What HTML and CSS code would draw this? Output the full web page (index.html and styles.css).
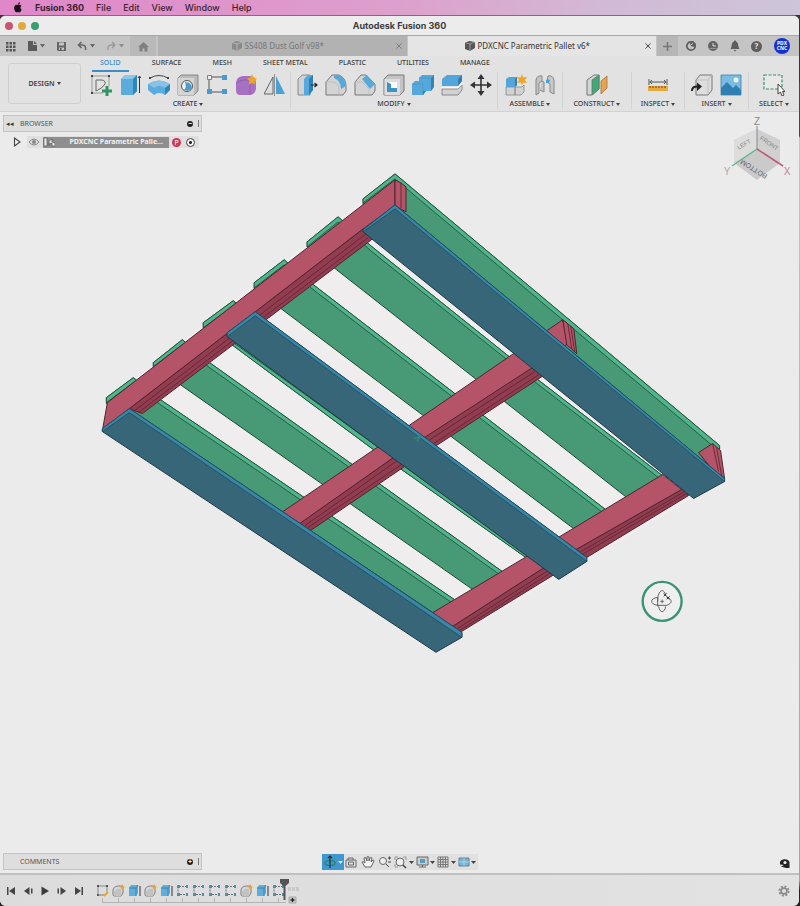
FILE: index.html
```html
<!DOCTYPE html>
<html lang="en">
<head>
<meta charset="utf-8">
<title>Autodesk Fusion 360</title>
<link rel="stylesheet" href="styles.css">
</head>
<body>
<svg class="defs" aria-hidden="true">
  <symbol id="doc-cube" viewBox="0 0 12 12"><path d="M1 2.500 5.500 1 11 2v6L6 11 1 9z" fill="currentColor"/><path d="M1 2.500 6 4l5-2M6 4v7" stroke="#ddd" stroke-width=".5" fill="none"/></symbol>
  <symbol id="t-fillet" viewBox="0 0 13 13"><path d="M1 11V7q0-5 6-5h4v7l-2 3H2z" fill="#d6d6d6" stroke="#777" stroke-width=".9"/><path d="M2 12V8q3-4 7-3v7" fill="#c2c2c2"/><path d="m10 0 1 2.200 2 .6-2 1-1 2.200-1-2.200-2-1 2-.6z" fill="#e8a52e"/></symbol>
  <symbol id="t-extrude" viewBox="0 0 13 13"><path d="M1 4 3 1h7v8l-2 3H1z" fill="#62acd8"/><path d="M1 4h7l2-3M8 4v8" stroke="#2f7fb3" stroke-width=".8" fill="none"/><path d="M12 2v10" stroke="#333"/></symbol>
  <symbol id="t-pattern" viewBox="0 0 13 13"><path d="M2 10.500V2.500h9M4 10.500h7" stroke="#555" stroke-width=".8" stroke-dasharray="2 1" fill="none"/><path d="M1 1h3v3H1zm0 8h3v3H1zm9-8h2v3h-2zm0 8h2v3h-2z" fill="#4c8faf"/></symbol>
</svg>

<nav class="menubar" aria-label="System menu">
  <svg class="apple" viewBox="0 0 10 12"><path d="M5 3.500C4 3 3 2.800 2 3.500.3 4.700.3 8 2 10.300c1 1.400 1.800.9 3 .6 1.200.3 2 .8 3-.6.500-.700.8-1.300 1-2C7.300 7.500 7.300 5.200 8.800 4.200 7.600 2.800 6 3 5 3.500zM5 3C4.900 1.500 6 .4 7.200.2 7.300 1.700 6.300 2.900 5 3z" fill="#1c1018"/></svg>
  <a class="app" href="#">Fusion 360</a><a href="#">File</a><a href="#">Edit</a><a href="#">View</a><a href="#">Window</a><a href="#">Help</a>
</nav>

<div class="window">
  <header class="titlebar">
    <span class="lights"><i class="red"></i><i class="yellow"></i><i class="green"></i></span>
    <h1>Autodesk Fusion 360</h1>
  </header>

  <div class="docbar">
    <div class="quick">
      <button aria-label="Data panel"><svg width="11" height="11" viewBox="0 0 11 11"><path d="M1 1h2.500v2.500H1zm3.500 0H7v2.500H4.500zM8 1h2.500v2.500H8zM1 4.500h2.500V7H1zm3.500 0H7V7H4.500zM8 4.500h2.500V7H8zM1 8h2.500v2.500H1zm3.500 0H7v2.500H4.500zM8 8h2.500v2.500H8z" fill="#555"/></svg></button>
      <button aria-label="File"><svg width="18" height="12" viewBox="0 0 18 12"><path d="M1 1h5v4h4v6H1zM7 1l3 3H7z" fill="#5a5a5a"/><path d="M13 4h5l-2.500 3.500z" fill="#666"/></svg></button>
      <button aria-label="Save"><svg width="11" height="11" viewBox="0 0 11 11"><path d="M1 1h9v9H2L1 9z" fill="#666"/><path d="M3 1.500h5v3H3zm0 5h5V9H3z" fill="#c4c4c4"/><path d="M4 7h1.500v3H4z" fill="#555"/></svg></button>
      <button aria-label="Undo"><svg width="18" height="11" viewBox="0 0 18 11"><path d="M4.500 1 1.500 4l3 3M2 4h3.500C8 4 9 6 8.500 9" stroke="#666" stroke-width="1.600" fill="none"/><path d="M13 3h5l-2.500 3.500z" fill="#666"/></svg></button>
      <button aria-label="Redo"><svg width="18" height="11" viewBox="0 0 18 11"><path d="m6 1 3 3-3 3M8.500 4H5C2.500 4 1.500 6 2 9" stroke="#999" stroke-width="1.400" fill="none"/><path d="M13 3h5l-2.500 3.500z" fill="#8d8d8d"/></svg></button>
    </div>
    <button class="home" aria-label="Home"><svg width="11" height="11" viewBox="0 0 11 11"><path d="m0 6 5.500-5L11 6H9.500v4.500h-3v-3h-2v3h-3V6z" fill="#808080"/></svg></button>
    <div class="doc"><svg class="cube"><use href="#doc-cube"/></svg><span>SS408 Dust Golf v98*</span><button class="close" aria-label="Close SS408 Dust Golf"><svg viewBox="0 0 7 7"><path d="m.5.500 6 6m0-6-6 6" stroke="currentColor"/></svg></button></div>
    <div class="doc active"><svg class="cube"><use href="#doc-cube"/></svg><span>PDXCNC Parametric Pallet v6*</span><button class="close" aria-label="Close PDXCNC Parametric Pallet"><svg viewBox="0 0 7 7"><path d="m.5.500 6 6m0-6-6 6" stroke="currentColor"/></svg></button></div>
    <button class="plus" aria-label="New tab"><svg width="9" height="9" viewBox="0 0 9 9"><path d="M4.500 0v9M0 4.500h9" stroke="#777" stroke-width="1.600"/></svg></button>
    <div class="status">
      <button aria-label="Extensions"><svg width="12" height="12" viewBox="0 0 12 12"><circle cx="6" cy="6" r="4.200" fill="none" stroke="#5d5d5d" stroke-width="1.700"/><path d="M6 6 5 3l3-2 3 3-2 3z" fill="#5d5d5d"/><path d="m6 5 2-2" stroke="#c4c4c4"/></svg></button>
      <button aria-label="Job status"><svg width="12" height="12" viewBox="0 0 12 12"><circle cx="6" cy="6" r="5" fill="#636363"/><path d="M6 3v3h3" stroke="#ddd" fill="none"/><path d="m2.500 8.500 7 0" stroke="#aaa" stroke-width=".7"/></svg></button>
      <button aria-label="Notifications"><svg width="12" height="12" viewBox="0 0 12 12"><path d="M6 .5c.8 0 1 .5 1 1C10 2.500 8.500 6 10.500 9h-9C3.500 6 2 2.500 5 1.500c0-.5.200-1 1-1zM4.500 10h3L6 11.500z" fill="#5d5d5d"/></svg></button>
      <button class="help" aria-label="Help">?</button>
      <button class="avatar" aria-label="Account">PDX<br>CNC</button>
    </div>
  </div>

  <section class="ribbon">
    <button class="workspace">DESIGN<i class="caret"></i></button>
    <div class="tools">
      <div class="tabs">
        <button class="on">SOLID</button><button>SURFACE</button><button>MESH</button><button>SHEET METAL</button><button>PLASTIC</button><button>UTILITIES</button><button>MANAGE</button>
      </div>
      <div class="groups">
        <div class="group">
          <div class="icons">
            <svg viewBox="0 0 22 22"><path d="M2 2v17h11M2 2h17v10" fill="none" stroke="#888" stroke-width=".8"/><path d="M6 17V6h5q5 0 4 4-2 4-9 7z" fill="none" stroke="#666"/><path d="M1 1h2v2H1zm17 0h2v2h-2zM1 18h2v2H1z" fill="#444"/><path d="M17 12v10M12 17h10" stroke="#2e9460" stroke-width="3"/></svg>
            <svg viewBox="0 0 22 22"><path d="M2 5 6 1h12v16l-4 4H2z" fill="#5aabde"/><path d="M2 5 6 1h12l-4 4z" fill="#8cc7e8"/><path d="M14 5l4-4v16l-4 4z" fill="#3285bb"/><path d="M20.500 3v16M19 4l1.500-2L22 4" stroke="#333" fill="none"/></svg>
            <svg viewBox="0 0 22 22"><path d="M0 10q11-7 22 0v6l-5 5q-6-4-11 0l-6-5z" fill="#5aabde"/><path d="M0 10q11-7 22 0l-5 4q-6-4-11 0z" fill="#86c3e6"/><path d="M17 14l5-4v6l-5 5z" fill="#3285bb"/><path d="M2 4Q11-1 20 4" stroke="#444" fill="none"/><path d="M1 3h2v2H1zm18 0h2v2h-2z" fill="#444"/></svg>
            <svg viewBox="0 0 22 22"><path d="M1 4 4 1h17v16l-4 4H1z" fill="#bcbcbc" stroke="#777" stroke-width=".8"/><path d="M1 4h16v17H1z" fill="#d4d4d4"/><circle cx="10" cy="12" r="5.500" fill="#f0f0f0" stroke="#555"/><path d="M8 8q7 0 7 7-4 3-8 1 3-3 1-8z" fill="#4c9cce"/></svg>
            <svg viewBox="0 0 22 22"><path d="M3 6v10M6 3h10M6 18h10" stroke="#555" fill="none"/><path d="M1.500 1.500h4v4h-4z" fill="#eee" stroke="#666" stroke-width=".8"/><path d="M16 1h5v5h-5zM1 15h5v5H1zm15 0h5v5h-5z" fill="#459bd0"/></svg>
            <svg viewBox="0 0 22 22"><path d="M1 9q0-6 7-7h7q6 1 6 7v6q-1 6-7 6H5q-4 0-4-5z" fill="#a870c2"/><path d="M1 9q3-3 9-3 5 0 5 4v11" stroke="#9059ad" stroke-width=".8" fill="none"/><path d="m17 0 1.500 3.500L22 4.500 19.500 7l1 3.500L17 9l-3.500 1.500 1-3.500L12 4.500l3.500-1z" fill="#eda629"/></svg>
            <svg viewBox="0 0 22 22"><path d="M9 3v17H0z" fill="#ddd" stroke="#666"/><path d="M12 2v18h9z" fill="#4ba0d4"/><path d="M10.500 0v22" stroke="#777" stroke-width=".8"/></svg>
          </div>
          <button class="label">CREATE<i class="caret"></i></button>
        </div>
        <div class="group">
          <div class="icons">
            <svg viewBox="0 0 22 22"><path d="M2 5 6 1h8v20H2z" fill="#d2d2d2" stroke="#777" stroke-width=".8"/><path d="M8 5l4-4h5v15l-4 5H8z" fill="#56a9dc"/><path d="M13 5l4-4v15l-4 5z" fill="#317fb0"/><path d="M15 11h5M18.500 9 21 11l-2.500 2" stroke="#222" stroke-width="1.200" fill="none"/></svg>
            <svg viewBox="0 0 22 22"><path d="M1 21V8l6-7h7q7 3 7 11v5l-3 4z" fill="#d4d4d4" stroke="#777"/><path d="M1 8h7q6 1 6 7v6" fill="none" stroke="#bbb" stroke-width=".8"/><path d="M9 1h5q7 3 7 11l-5 3Q16 7 9 4z" fill="#58a9da"/></svg>
            <svg viewBox="0 0 22 22"><path d="M1 21V8l6-7h5l9 9v7l-3 4z" fill="#d4d4d4" stroke="#777"/><path d="M1 8h7l7 7v6" fill="none" stroke="#bbb" stroke-width=".8"/><path d="m8 5 5-4 8 9-5 5z" fill="#58a9da"/></svg>
            <svg viewBox="0 0 22 22"><path d="M1 5 5 1h16v16l-4 4H1z" fill="#c4c4c4" stroke="#777"/><path d="M1.500 5H17v16H1.500z" fill="#ddd"/><path d="M4 8h10v10H4z" fill="#f2f2f2"/><path d="M4 8l4 2v4h6v4H4z" fill="#3b93c7"/><path d="M8 8h6v6H8z" fill="#fafafa"/></svg>
            <svg viewBox="0 0 22 22"><path d="M7 4l3-3h12v12l-3 4h-5l-3 4H0V10l3-3h4z" fill="#57a8da"/><path d="M0 10h11v11M7 4h12" stroke="#4898ca" stroke-width=".8" fill="none"/><path d="m19 4 3-3v12l-3 4zM11 17h3l-3 4z" fill="#3583b4"/></svg>
            <svg viewBox="0 0 22 22"><path d="M1 5 6 1h15v6l-4 5H1z" fill="#54a6da"/><path d="m17 5 4-4v6l-4 5z" fill="#317fb0"/><path d="M1 15h16l4-4v5l-4 5H1z" fill="#d2d2d2" stroke="#777" stroke-width=".8"/><path d="M0 13.500h17l5-5" stroke="#f6f6f6" fill="none" stroke-width="1.600"/></svg>
            <svg viewBox="0 0 22 22"><path d="M11 3v16M3 11h16" stroke="#333" stroke-width="1.600"/><path d="m11 0 3.500 5h-7zm0 22 3.500-5h-7zM0 11l5-3.500v7zm22 0-5-3.500v7z" fill="#333"/></svg>
          </div>
          <button class="label">MODIFY<i class="caret"></i></button>
        </div>
        <div class="group">
          <div class="icons">
            <svg viewBox="0 0 22 22"><path d="M1 13h9v8H1zM10 13h7l2-2v7l-3 3h-6z" fill="#d2d2d2" stroke="#888" stroke-width=".8"/><path d="M1 5l3-2h8v8l-2 2H1z" fill="#54a6da"/><path d="m10 5 2-2v8l-2 2z" fill="#317fb0"/><path d="m17 0 1.300 3.500L22 3l-2 3 2 3-3.700-.5L17 11l-1.300-2.500L12 9l2-3-2-3 3.700.5z" fill="#eda629"/></svg>
            <svg viewBox="0 0 22 22"><path d="M2 6q1-5 6-4v5l-3 2v10l-3 2zM8 7l2 1v10l-4-2" fill="#c4c4c4" stroke="#888"/><path d="M20 6q-1-5-6-4l-1 6 3 2v8l4 2z" fill="#c9c9c9" stroke="#888"/><path d="M12 6q3-2 4 1-1 3-4 2z" fill="#4ba0d4"/></svg>
          </div>
          <button class="label">ASSEMBLE<i class="caret"></i></button>
        </div>
        <div class="group">
          <div class="icons"><svg viewBox="0 0 22 22"><path d="M1 6 8 1h5v14l-7 6H1z" fill="#d4d4d4" stroke="#777"/><path d="m6 6 7-5v14l-7 6z" fill="#43a878" stroke="#5b7d6d" stroke-width=".8"/><path d="m15 7 6-5v12l-6 6z" fill="#eba24c" stroke="#a2733e" stroke-width=".8"/></svg></div>
          <button class="label">CONSTRUCT<i class="caret"></i></button>
        </div>
        <div class="group">
          <div class="icons"><svg viewBox="0 0 22 22"><path d="M2 5v6M20 5v6M3 8h16M5 6 3 8l2 2M17 6l2 2-2 2" stroke="#555" fill="none"/><path d="M1 12h20v5H1z" fill="#e8a93e"/><path d="M3 12v2m3-2v2m3-2v2m3-2v2m3-2v2m3-2v2" stroke="#644719"/></svg></div>
          <button class="label">INSPECT<i class="caret"></i></button>
        </div>
        <div class="group">
          <div class="icons">
            <svg viewBox="0 0 22 22"><path d="M5 6l4-5h12v15l-4 5H5z" fill="#ddd" stroke="#777"/><path d="M5 6h12l4-5M17 6v14" stroke="#bbb" fill="none" stroke-width=".8"/><path d="M1 17q0-5 6-4.500" fill="none" stroke="#222" stroke-width="2"/><path d="m6 8.500 5 4L6 17z" fill="#222"/></svg>
            <svg viewBox="0 0 22 22"><path d="M1 1h20v20H1z" fill="#79bce4" stroke="#3e83ad" stroke-width=".8"/><path d="M1 14l6-6 6 6 3-3 5 5v5H1z" fill="#2f7fb3"/><circle cx="16" cy="6" r="2.500" fill="#eef6fa"/></svg>
          </div>
          <button class="label">INSERT<i class="caret"></i></button>
        </div>
        <div class="group">
          <div class="icons"><svg viewBox="0 0 22 22"><path d="M1 1h18v14H1z" fill="#e8e8e8" stroke="#349368" stroke-width="1.200" stroke-dasharray="3 1.500"/><path d="M15 10v10l2.500-2 1.500 4 2-1-1.500-3.500H22z" fill="#fff" stroke="#333" stroke-width=".9"/></svg></div>
          <button class="label">SELECT<i class="caret"></i></button>
        </div>
      </div>
    </div>
  </section>

  <main class="canvas">
    <svg class="model" viewBox="0 111 799 762" role="img" aria-label="Pallet model">
      <path d="M395 174 724 448 725 479 462 633 104 428 107 400z" fill="#efedee"/>
      <g class="slats">
        <path d="M363 198 395 173 720 445 720 452 690 480 363 204z"/>
        <path d="M307 241 338 216 372 246 538 379 664 476 627 497 334 267 307 246z"/>
        <path d="M254 282 284 259 312 283 607 510 575 529 281 308 254 288z"/>
        <path d="M203 322 233 300 560 550 526 557 372 448 233 345 203 327z"/>
        <path d="M153 362 182 339 208 361 505 573 474 590 180 384 153 366z"/>
        <path d="M106 397 133 377 160 399 457 601 437 615 130 410 106 403z"/>
      </g>
      <g class="slat-edge">
        <path d="M363 198 395 173 720 445 720 449 714 446 395 178 363 202z"/>
        <path d="M307 241 338 216 372 246 538 379 664 476 660 478 536 382 372 251 338 221 307 246z"/>
        <path d="M254 282 284 259 312 283 607 510 603 512 312 288 284 264 254 287z"/>
        <path d="M203 322 233 300 236 303 203 327z"/>
        <path d="M153 362 182 339 208 361 505 573 501 575 208 366 182 344 153 366z"/>
        <path d="M106 397 133 377 160 399 457 601 453 603 160 404 133 382 106 402z"/>
        <path d="M229 339 535 560 526 557 372 448 233 345z"/>
      </g>
      <g class="beam-side">
        <path d="M129 408 363 228 380 231 370 240 142 413z"/>
        <path d="M296 525 392 458 531 367 553 358 542 376 438 444 403 467 312 529 300 535z"/>
        <path d="M448 629 543 568 682 489 689 495 587 557 553 575 462 631 448 638z"/>
      </g>
      <g class="beam-face">
        <path d="M107 402 395 179 395 205 363 228 129 408 102 430z"/>
        <path d="M395 179 401 182 406 186 406 211 395 205z"/>
        <path d="M274 517 377 447 563 319 568 343 531 368 392 458 294 527z"/>
        <path d="M563 319 574 328 577 353 567 344z"/>
        <path d="M425 617 527 556 663 474 682 489 543 568 445 631z"/>
        <path d="M699 452 713 443 721 450 725 478 715 472z"/>
      </g>
      <path class="hairline" d="M133 411 366 233M138 412 368 237M401 182v25M305 525 396 461 535 371M308 527 400 465 539 374M458 628 547 571 685 491M460 630 550 573 687 493M568 323l4 25M571 326l4 25M713 443l6 28M717 447l5 28"/>
      <g class="deck">
        <path d="M363 229 395 204 725 478 725 481 694 498 363 231z"/>
        <path d="M227 332 255 311 587 557 587 561 559 579 227 336z"/>
        <path d="M102 428 129 408 462 632 462 637 436 652 102 431z"/>
      </g>
      <g class="deck-edge">
        <path d="M363 229 395 204 725 478 725 481 395 208 363 231z"/>
        <path d="M227 332 255 311 587 557 587 561 255 315 227 336z"/>
        <path d="M102 428 129 408 462 632 462 637 129 412 102 431z"/>
      </g>
      <path d="m414 438 6-2-3 5" fill="none" stroke="#2f8d70" stroke-width="1.200"/>
      <circle cx="662.500" cy="601" r="19.500" fill="#efefef" stroke="#3b9375" stroke-width="2.400"/>
      <g fill="none" stroke="#555" stroke-width=".9"><path d="M658 597c-8 1-8 7 0 8M667 597c6 2 6 6 0 8M658 605h9M658 601c0-13 7-13 8-6M659 606c1 7 6 7 7 0M658 597v9"/><path d="M662.500 599v4m-2-2h4" stroke-width=".8"/><path d="m664 593 3 3m0-3-3 3m3 0 3 3m0-3-3 3" stroke="#222"/></g>
    </svg>

    <svg class="viewcube" viewBox="0 0 70 68" role="img" aria-label="View cube">
      <path d="M35 14 12 25v21l23 17 23-17V25z" fill="#d4d4d4"/>
      <path d="M35 14 12 25v23l23-14z" fill="#dcdcdc"/><path d="M35 14 58 25v23L35 34z" fill="#d0d0d0"/><path d="m12 48 23-14 23 14-23 17z" fill="#cacaca"/>
      <path d="M35 11v23" stroke="#888"/><path d="M35 34 10 51" stroke="#62b797" stroke-width="1.500"/><path d="m35 34 26 17" stroke="#c05a77" stroke-width="1.500"/>
      <g class="axis"><text x="35" y="10">Z</text><text class="y" x="5" y="60">Y</text><text class="x" x="65" y="60">X</text></g>
      <g class="faces"><text transform="translate(23 31) rotate(-30)">LEFT</text><text transform="translate(46 30) rotate(33)">FRONT</text><text class="bottom" transform="translate(33 52) rotate(212)">BOTTOM</text></g>
    </svg>

    <div class="browser">
      <div class="panel"><span class="rewind">◂◂</span><h2>BROWSER</h2><button class="dot" aria-label="Collapse browser">−</button><i class="grip"></i></div>
      <div class="node">
        <svg class="tri" viewBox="0 0 8 10"><path d="M1.500 1v8L7 5z" fill="#eee" stroke="#444" stroke-width="1.100"/></svg>
        <div class="node-row">
          <svg width="12" height="8" viewBox="0 0 12 8"><path d="M1 4q5-6 10 0-5 6-10 0z" fill="none" stroke="#888"/><circle cx="6" cy="4" r="2" fill="#888"/></svg>
          <span class="name"><svg width="12" height="10" viewBox="0 0 12 10"><path d="M1 9V1h3v8zM6 9V4l3-2v3l3 1v3H9V6L6 7" fill="#ececec" stroke="#555" stroke-width=".7"/></svg><b>PDXCNC Parametric Palle...</b></span>
          <span class="badge">P</span>
          <label class="radio"><input type="radio" name="active" checked aria-label="Activate component"></label>
        </div>
      </div>
    </div>

    <div class="bottom">
      <div class="panel"><h2>COMMENTS</h2><button class="dot" aria-label="Add comment">+</button><i class="grip"></i></div>
      <div class="navbar">
        <button class="on" aria-label="Orbit"><svg width="22" height="16" viewBox="0 0 22 16"><ellipse cx="8" cy="9" rx="5" ry="2.500" fill="none" stroke="#2f7d5c" stroke-width="1.200"/><path d="M8 2v12M6 4l2-2 2 2" stroke="#234" stroke-width="1.200" fill="none"/><path d="M16 7h5l-2.500 3z" fill="#cfe4f0"/></svg></button>
        <button aria-label="Look at"><svg width="15" height="16" viewBox="0 0 15 16"><path d="M2 6h10v7H2zM4 6V4h5v2M4.500 8h5v3h-5z" fill="none" stroke="#666"/></svg></button>
        <button aria-label="Pan"><svg width="18" height="16" viewBox="0 0 18 16"><path d="M6 13 3 8q1-1 3 1L5 4q1-1 2 0l1 3V3q1-1 2 0v4l1-3q1-1 2 0l-1 4 2-2q1 0 1 1l-3 6z" fill="#f4f4f4" stroke="#555" stroke-width=".9"/></svg></button>
        <button aria-label="Zoom"><svg width="16" height="16" viewBox="0 0 16 16"><circle cx="6" cy="7" r="3.500" fill="#eee" stroke="#666"/><path d="m9 10 3 3M11 4h3m-1.500-1.500v3M11 8h3" stroke="#444"/></svg></button>
        <button aria-label="Fit"><svg width="22" height="16" viewBox="0 0 22 16"><path d="M2 6V3h3m5 0h3v3M2 10v3h3" stroke="#888" stroke-width=".8" fill="none"/><circle cx="7" cy="8" r="4" fill="#eee" stroke="#666"/><path d="m10 11 3 3" stroke="#444" stroke-width="1.600"/><path d="M16 7h5l-2.500 3z" fill="#444"/></svg></button>
        <button aria-label="Display settings"><svg width="21" height="16" viewBox="0 0 21 16"><path d="M2 3h11v8H2z" fill="#ccc" stroke="#666"/><path d="M5 5h5v4H5z" fill="#599cc1"/><path d="M4 13h7M7.500 11v2" stroke="#666"/><path d="M15 7h5l-2.500 3z" fill="#444"/></svg></button>
        <button aria-label="Grid"><svg width="21" height="16" viewBox="0 0 21 16"><path d="M2 3h10v10H2zm2.500 0v10M7 3v10m2.500-10v10M2 5.500h10M2 8h10M2 10.500h10" fill="none" stroke="#777"/><path d="M15 7h5l-2.500 3z" fill="#444"/></svg></button>
        <button aria-label="Viewports"><svg width="21" height="16" viewBox="0 0 21 16"><path d="M2 4h10v8H2z" fill="#74b4d8" stroke="#608296"/><path d="M7 4v8M2 8h10" stroke="#c4d8e3" stroke-width=".8"/><path d="M14 7h5l-2.500 3z" fill="#444"/></svg></button>
      </div>
      <button class="assist" aria-label="Assistant"><svg width="11" height="11" viewBox="0 0 11 11"><path d="M1 4a5 4 0 0 1 9.500 0v6H7L2 8.500 5 7 1 6.500z" fill="#222"/><circle cx="6" cy="4.500" r="1.600" fill="#eee"/></svg></button>
    </div>
  </main>

  <footer class="timeline">
    <div class="play">
      <button aria-label="Go to start"><svg viewBox="0 0 10 10"><path d="M1 1h1.500v8H1zM9 1v8L3 5z" fill="#444"/></svg></button>
      <button aria-label="Step back"><svg viewBox="0 0 10 10"><path d="M6.500 1v8L1 5zM8 2.500h1.500v5H8z" fill="#444"/></svg></button>
      <button aria-label="Play"><svg viewBox="0 0 10 10"><path d="M1.500.500v9L9 5z" fill="#3c3c3c"/></svg></button>
      <button aria-label="Step forward"><svg viewBox="0 0 10 10"><path d="M3.500 1v8L9 5zM.5 2.500H2v5H.5z" fill="#444"/></svg></button>
      <button aria-label="Go to end"><svg viewBox="0 0 10 10"><path d="M7.500 1H9v8H7.500zM1 1v8l6-4z" fill="#444"/></svg></button>
    </div>
    <div class="history">
      <svg viewBox="0 0 13 13"><path d="M2 11V2h9v6" stroke="#777" stroke-width=".8" fill="none"/><path d="M1 1h2v2H1zm9 0h2v2h-2zm-9 9h2v2H1z" fill="#555"/><path d="M2 11h6" stroke="#777"/><path d="m8 12 4-4" stroke="#e8a52e" stroke-width="2"/></svg>
      <svg><use href="#t-fillet"/></svg><svg><use href="#t-extrude"/></svg><svg><use href="#t-fillet"/></svg><svg><use href="#t-extrude"/></svg><svg><use href="#t-pattern"/></svg><svg><use href="#t-pattern"/></svg><svg><use href="#t-pattern"/></svg><svg><use href="#t-pattern"/></svg><svg><use href="#t-fillet"/></svg><svg><use href="#t-extrude"/></svg><svg><use href="#t-pattern"/></svg>
      <svg class="marker" viewBox="0 0 22 26"><path d="M0 1h9v4L5.500 8v14h-2V8L0 5z" fill="#555"/><path d="M9 19h7v6H9z" fill="#ccc" stroke="#999" stroke-width=".8"/><path d="M12.500 20v4m-2-2h4" stroke="#222" stroke-width="1.300"/><path d="M8 9h3v4H8zm4 0h3v4h-3zm4 0h3v4h-3z" fill="#cacaca"/></svg>
      <i class="track"></i>
    </div>
    <button class="gear" aria-label="Settings"><svg width="12" height="12" viewBox="0 0 12 12"><circle cx="6" cy="6" r="4.600" fill="none" stroke="#8a8a8a" stroke-width="1.800" stroke-dasharray="2 1.600"/><circle cx="6" cy="6" r="2.900" fill="none" stroke="#8a8a8a" stroke-width="1.600"/></svg></button>
  </footer>
</div>
</body>
</html>
```
FILE: styles.css
```css
* { box-sizing: border-box; }

body {
  margin: 0;
  min-height: 100vh;
  display: flex;
  flex-direction: column;
  background: linear-gradient(#3a3338 80px, #8c2440 84px, #8c2440 136px, #c4c4c4 138px, #a4a4a4 880px, #222 890px);
  font-family: "Noto Sans", "Open Sans", sans-serif;
  font-size: 7px;
  line-height: 10px;
  color: #3c3c3c;
}

button {
  margin: 0;
  padding: 0;
  border: 0;
  background: none;
  font: inherit;
  color: inherit;
  display: flex;
  align-items: center;
  justify-content: center;
}

svg { display: block; flex: none; }
h1, h2 { margin: 0; font-size: inherit; }
.defs { position: absolute; width: 0; height: 0; }

.caret {
  display: inline-block;
  margin-left: 2px;
  border: 2px solid transparent;
  border-top: 3px solid #444;
  border-bottom: 0;
}

.menubar {
  height: 15px;
  display: flex;
  align-items: center;
  gap: 12px;
  padding-left: 13px;
  background: linear-gradient(90deg, #e087c8, #dda0cd 50%, #d2b9d5 75%, #cdc5da);
  font-family: Inter, sans-serif;
  font-size: 9px;
  font-weight: 500;
}
.menubar a { color: #3a2234; text-decoration: none; }
.menubar .app { font-weight: 700; }
.apple { width: 10px; height: 11px; }

.window {
  flex: 1;
  display: flex;
  flex-direction: column;
  margin-right: 1px;
  border-top: 1px solid #77707a;
  border-radius: 6px;
  background: #ebebeb;
  overflow: hidden;
}

.titlebar {
  height: 19px;
  display: grid;
  grid-template-columns: 1fr auto 1fr;
  align-items: center;
  background: #ececec;
  font-family: Inter, sans-serif;
  font-size: 9px;
  font-weight: 600;
}
.lights { display: flex; gap: 5px; padding-left: 5px; }
.lights i { width: 8px; height: 8px; border-radius: 50%; }
.red { background: #c9566f; }
.yellow { background: #e3a83a; }
.green { background: #3a9d70; }

.docbar {
  height: 21px;
  display: flex;
  align-items: stretch;
  border-top: 1px solid #a8a8a8;
  background: #c4c4c4;
}
.quick {
  flex: 0 0 130px;
  display: flex;
  align-items: center;
  justify-content: space-between;
  padding: 0 6px 0 5px;
}
.home { width: 26px; background: #b9b9b9; }
.doc {
  flex: 1;
  display: flex;
  align-items: center;
  justify-content: center;
  gap: 2px;
  margin-left: 2px;
  padding-right: 10px;
  position: relative;
  background: #b2b2b2;
  color: #777;
  font-size: 8px;
}
.doc + .doc { margin-left: 1px; }
.doc.active { background: #e5e5e5; color: #333; }
.cube { width: 12px; height: 12px; color: #8b8b8b; }
.active .cube { color: #555; }
.close { position: absolute; right: 5px; }
.close svg { width: 6px; height: 6px; }
.plus { width: 21px; margin-left: 1px; background: #b6b6b6; }
.status {
  display: flex;
  align-items: center;
  gap: 10px;
  padding: 0 9px 0 7px;
}
.help {
  width: 11px;
  height: 11px;
  border-radius: 50%;
  background: #5d5d5d;
  color: #e0e0e0;
  font-size: 8px;
  font-weight: 700;
}
.avatar {
  width: 16px;
  height: 16px;
  margin-left: 2px;
  border-radius: 50%;
  background: #1030d8;
  color: #fff;
  font-size: 5px;
  line-height: 5px;
  font-weight: 700;
}

.ribbon {
  height: 56px;
  display: flex;
  border-bottom: 1px solid #d2d2d2;
  background: #e2e2e2;
}
.workspace {
  width: 73px;
  height: 41px;
  margin: 7px 5px 0 8px;
  border: 1px solid #cfcfcf;
  border-radius: 3px;
  font-weight: 600;
}
.tools { flex: 1; display: flex; flex-direction: column; }
.tabs { display: flex; gap: 15px; height: 16px; padding-left: 6px; }
.tabs button { padding: 0 8px; border-bottom: 2px solid transparent; font-weight: 500; }
.tabs .on { border-color: #3b8fc6; color: #3b8fc6; }
.groups {
  flex: 1;
  display: grid;
  grid-template-columns: 205fr 207fr 65fr 69fr 53fr 64fr 50fr;
  padding-bottom: 2px;
}
.group {
  display: flex;
  flex-direction: column;
  align-items: center;
  gap: 3px;
  padding-top: 2px;
  border-right: 1px solid #d3d3d3;
}
.group:last-child { border: 0; }
.icons { display: flex; gap: 7px; }
.icons svg { width: 22px; height: 22px; }
.label { font-weight: 500; white-space: nowrap; }

.canvas {
  flex: 1;
  position: relative;
  display: flex;
  flex-direction: column;
  justify-content: space-between;
  padding: 3px;
}
.model { position: absolute; left: 0; top: 0; width: 100%; height: 100%; }
.model path { stroke-linejoin: round; }
.slats path { fill: #489975; stroke: #1d4a38; }
.slat-edge path { fill: #50b58a; stroke: #1d4a38; stroke-width: .8; }
.beam-side path { fill: #933c50; stroke: #4b2630; }
.beam-face path { fill: #b55468; stroke: #4b2630; }
.hairline { fill: none; stroke: #5b2836; stroke-width: .9; }
.deck path { fill: #376679; stroke: #1d3947; }
.deck-edge path { fill: #3986a5; stroke: #1d4b60; stroke-width: .8; }

.viewcube { position: absolute; right: 7px; top: 3px; width: 70px; height: 68px; }
.viewcube text { text-anchor: middle; fill: #888; font-family: "Liberation Sans", sans-serif; font-size: 6px; }
.viewcube .axis text { font-size: 10px; fill: #888; }
.viewcube .axis .x { fill: #c48292; }
.viewcube .axis .y { fill: #aaa; }
.viewcube .faces .bottom { font-size: 7px; fill: #666; }

.browser, .bottom { position: relative; }
.panel {
  width: 199px;
  height: 17px;
  display: flex;
  align-items: center;
  padding: 0 2px 0 16px;
  position: relative;
  border: 1px solid #c4c4c4;
  background: #dedede;
  color: #555;
}
.panel h2 { flex: 1; font-weight: 400; }
.rewind { position: absolute; left: 2px; color: #333; }
.dot {
  width: 6px;
  height: 6px;
  border-radius: 50%;
  background: #222;
  color: #fff;
  font-size: 7px;
  line-height: 6px;
  font-weight: 700;
}
.grip { width: 2px; height: 7px; margin-left: 4px; border-right: 1px solid #777; }
.node { display: flex; align-items: center; gap: 6px; padding: 4px 0 0 10px; }
.tri { width: 8px; height: 10px; }
.node-row { display: flex; align-items: center; gap: 3px; height: 12px; width: 172px; padding-left: 1px; background: #dfdfdf; }
.name {
  flex: 0 0 126px;
  display: flex;
  align-items: center;
  justify-content: space-between;
  height: 11px;
  padding-right: 6px;
  background: #8e8e8e;
  color: #f2f2f2;
  white-space: nowrap;
}
.name b { font-weight: 700; }
.badge {
  width: 9px;
  height: 9px;
  border-radius: 50%;
  background: #c23a5c;
  color: #fff;
  line-height: 9px;
  text-align: center;
}
.radio { display: flex; margin-left: 2px; }
.radio input {
  appearance: none;
  width: 9px;
  height: 9px;
  margin: 0;
  border: 1px solid #444;
  border-radius: 50%;
  background: radial-gradient(#222 0 1px, #f2f2f2 2px);
}

.bottom { display: grid; grid-template-columns: 1fr auto 1fr; align-items: center; }
.navbar { display: flex; background: #e0e0e0; }
.navbar .on { background: #3f97cc; }
.assist { justify-self: end; padding: 4px 6px 0 0; }

.timeline {
  height: 33px;
  display: flex;
  align-items: center;
  padding: 0 9px 0 6px;
  border-top: 2px solid #c0c0c0;
  background: linear-gradient(90deg, #dcdcdc, #e2e2e2);
}
.play { display: flex; gap: 7px; margin-right: 12px; }
.play svg { width: 10px; height: 10px; }
.history { flex: 1; display: flex; align-items: center; gap: 3px; position: relative; }
.history svg { width: 13px; height: 13px; }
.history .marker { width: 22px; height: 26px; margin-left: -8px; }
.track {
  position: absolute;
  left: 6px;
  bottom: 1px;
  width: 184px;
  height: 5px;
  border-bottom: 1px solid #b4b4b4;
  background: repeating-linear-gradient(90deg, #b4b4b4 0 1px, transparent 1px 16px);
}
```
